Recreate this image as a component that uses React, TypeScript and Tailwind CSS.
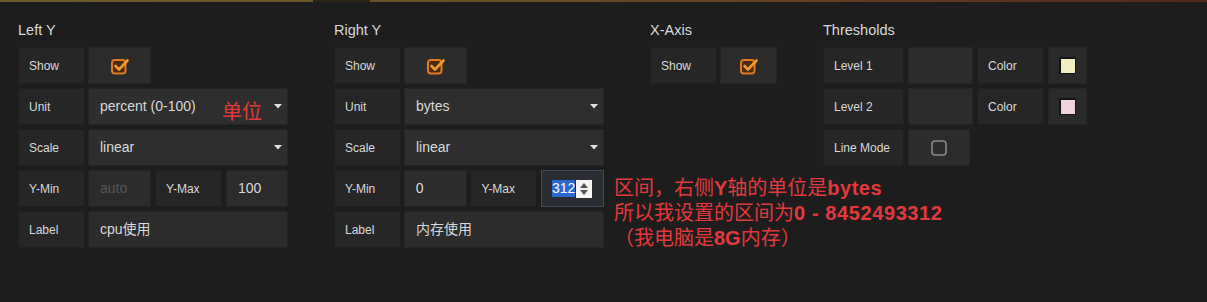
import React from "react";

const FONT = "font-['Liberation_Sans','Noto_Sans_CJK_SC',sans-serif]";

function CheckOn() {
  return (
    <svg width="20" height="20" viewBox="0 0 20 20">
      <rect x="2" y="4" width="13.5" height="13.5" rx="3" fill="#4a2a10" stroke="#e07a1c" strokeWidth="2" />
      <path d="M5.5 10 L9 13.5 L17.5 4.5" fill="none" stroke="#f39a2e" strokeWidth="2.6" strokeLinecap="round" strokeLinejoin="round" />
    </svg>
  );
}

function CheckOff() {
  return (
    <svg width="18" height="18" viewBox="0 0 18 18">
      <rect x="2" y="2" width="14" height="14" rx="3" fill="none" stroke="#8a8a8a" strokeWidth="1.6" />
    </svg>
  );
}

function Caret() {
  return (
    <svg width="8" height="5" viewBox="0 0 8 5">
      <path d="M0 0 L8 0 L4 4.5 Z" fill="#e0e0e0" />
    </svg>
  );
}

function Label({ children, w = "w-[67px]" }: { children: React.ReactNode; w?: string }) {
  return (
    <div className={`${w} h-full shrink-0 bg-[#262626] border border-[#1f1f1f] flex items-center pl-[10px] text-[12px] text-[#d8d9da]`}>
      {children}
    </div>
  );
}

function Input({ children, w, muted }: { children?: React.ReactNode; w: string; muted?: boolean }) {
  return (
    <div
      className={`${w} h-full shrink-0 bg-[#2c2c2c] border border-[#242424] flex items-center pl-[11px] text-[14px] ${
        muted ? "text-[#555]" : "text-[#d8d9da]"
      }`}
    >
      {children}
    </div>
  );
}

function Select({ value }: { value: string }) {
  return (
    <div className="w-[200px] h-full shrink-0 bg-[#2e2e2e] border border-[#242424] flex items-center justify-between pl-[11px] pr-[5px] text-[14px] text-[#d8d9da]">
      <span>{value}</span>
      <Caret />
    </div>
  );
}

function CheckCell({ on, w = "w-[63px]" }: { on: boolean; w?: string }) {
  return (
    <div className={`${w} h-full shrink-0 bg-[#2c2c2c] border border-[#242424] flex items-center justify-center`}>
      {on ? <CheckOn /> : <CheckOff />}
    </div>
  );
}

function Row({ children }: { children: React.ReactNode }) {
  return <div className="h-[37px] flex gap-[3px]">{children}</div>;
}

function Heading({ children }: { children: React.ReactNode }) {
  return <div className="text-[14.5px] leading-[20px] text-[#d8d9da] mb-[7px]">{children}</div>;
}

function YAxis({
  title,
  unit,
  min,
  max,
  label,
  focused,
}: {
  title: string;
  unit: string;
  min: React.ReactNode;
  max: React.ReactNode;
  label: string;
  focused?: boolean;
}) {
  return (
    <div className="w-[270px] shrink-0">
      <Heading>{title}</Heading>
      <div className="flex flex-col gap-[4px]">
        <Row>
          <Label>Show</Label>
          <CheckCell on />
        </Row>
        <Row>
          <Label>Unit</Label>
          <Select value={unit} />
        </Row>
        <Row>
          <Label>Scale</Label>
          <Select value="linear" />
        </Row>
        <div className="h-[37px] flex">
          <Label>Y-Min</Label>
          <div className="w-[3px]" />
          {min}
          <div className="w-[4px]" />
          <Label>Y-Max</Label>
          <div className="w-[4px]" />
          {focused ? (
            <div className="w-[63px] h-full shrink-0 bg-[#2a2d31] border border-[#3b4b60] flex items-center pl-[10px] text-[14px]">
              <span className="bg-[#2a6ad0] text-white leading-[17px]">312</span>
              <div className="ml-[1px] w-[16px] h-[18px] bg-[#f4f4f4] flex flex-col items-center justify-center gap-[2px]">
                <svg width="8" height="5" viewBox="0 0 8 5">
                  <path d="M0 5 L8 5 L4 0 Z" fill="#555" />
                </svg>
                <svg width="8" height="5" viewBox="0 0 8 5">
                  <path d="M0 0 L8 0 L4 5 Z" fill="#555" />
                </svg>
              </div>
            </div>
          ) : (
            max
          )}
        </div>
        <Row>
          <Label>Label</Label>
          <Input w="w-[200px]">{label}</Input>
        </Row>
      </div>
    </div>
  );
}

function Swatch({ color }: { color: string }) {
  return (
    <div className="w-[39px] h-full shrink-0 bg-[#2a2a2a] border border-[#242424] flex items-center justify-center">
      <div className="w-[17px] h-[17px] bg-[#151515] flex items-center justify-center">
        <div className="w-[14px] h-[14px]" style={{ background: color }} />
      </div>
    </div>
  );
}

export default function App() {
  return (
    <div className={`w-[1207px] h-[302px] bg-[#1d1d1d] relative overflow-hidden ${FONT}`}>
      <div className="flex h-[2px]">
        <div className="w-[313px] bg-gradient-to-r from-[#6b5c28] to-[#6a5526]" />
        <div className="w-[57px] bg-[#2a2418]" />
        <div className="flex-1 bg-gradient-to-r from-[#6a5426] via-[#664020] to-[#55261a]" />
      </div>
      <div className="flex gap-[46px] pl-[18px] pt-[18px]">
        <YAxis
          title="Left Y"
          unit="percent (0-100)"
          min={<Input w="w-[63px]" muted>auto</Input>}
          max={<Input w="w-[62px]">100</Input>}
          label="cpu使用"
        />
        <YAxis
          title="Right Y"
          unit="bytes"
          min={<Input w="w-[63px]">0</Input>}
          max={null}
          label="内存使用"
          focused
        />
        <div className="w-[127px] shrink-0">
          <Heading>X-Axis</Heading>
          <Row>
            <Label>Show</Label>
            <CheckCell on w="w-[57px]" />
          </Row>
        </div>
        <div className="shrink-0">
          <Heading>Thresholds</Heading>
          <div className="flex flex-col gap-[4px]">
            <div className="h-[37px] flex gap-[4px]">
              <Label w="w-[81px]">Level 1</Label>
              <Input w="w-[65px]" />
              <Label>Color</Label>
              <Swatch color="#f1eec2" />
            </div>
            <div className="h-[37px] flex gap-[4px]">
              <Label w="w-[81px]">Level 2</Label>
              <Input w="w-[65px]" />
              <Label>Color</Label>
              <Swatch color="#f1d3de" />
            </div>
            <div className="h-[37px] flex gap-[4px]">
              <Label w="w-[81px]">Line Mode</Label>
              <CheckCell on={false} w="w-[62px]" />
            </div>
          </div>
        </div>
      </div>

      <div className="absolute left-[222px] top-[100px] text-[20px] leading-[24px] text-[#e23a3c]">单位</div>
      <div className="absolute left-[614px] top-[176px] text-[20px] leading-[25px] text-[#e23a3c] whitespace-nowrap">
        <div>
          区间，右侧<b className="font-bold">Y</b>轴的单位是<b className="font-bold tracking-[0.5px]">bytes</b>
        </div>
        <div>
          所以我设置的区间为<b className="font-bold tracking-[0.6px]">0 - 8452493312</b>
        </div>
        <div>
          （我电脑是<b className="font-bold">8G</b>内存）
        </div>
      </div>
    </div>
  );
}
